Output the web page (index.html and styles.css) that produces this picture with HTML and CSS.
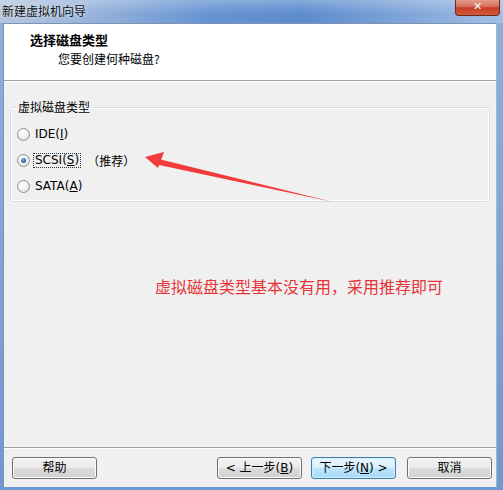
FILE: index.html
```html
<!DOCTYPE html>
<html>
<head>
<meta charset="utf-8">
<link rel="stylesheet" href="styles.css">
</head>
<body>
<div class="window">
  <div class="titlebar">
    <span class="title">新建虚拟机向导</span>
    <span class="close">✕</span>
  </div>
  <div class="client">
    <div class="header">
      <div class="heading">选择磁盘类型</div>
      <div class="subtitle">您要创建何种磁盘?</div>
    </div>
    <fieldset class="group">
      <legend>虚拟磁盘类型</legend>
      <div class="row"><span class="radio"></span><span class="label">IDE(<u>I</u>)</span></div>
      <div class="row"><span class="radio checked"></span><span class="label focus">SCSI(<u>S</u>)</span><span class="rec">（推荐）</span></div>
      <div class="row"><span class="radio"></span><span class="label">SATA(<u>A</u>)</span></div>
    </fieldset>
    <div class="note">虚拟磁盘类型基本没有用，采用推荐即可</div>
    <div class="spacer"></div>
    <div class="separator"></div>
    <div class="buttons">
      <span class="btn">帮助</span>
      <span class="grow"></span>
      <span class="btn">&lt; 上一步(<u>B</u>)</span>
      <span class="btn default">下一步(<u>N</u>) &gt;</span>
      <span class="btn cancel">取消</span>
    </div>
  </div>
</div>
<svg class="arrow" width="503" height="490" viewBox="0 0 503 490">
  <polygon points="155.7,158.2 333,202 154.3,164" fill="#f23b3b"/>
  <polygon points="145,157 164,152 158,168" fill="#f23b3b"/>
</svg>
</body>
</html>
```
FILE: styles.css
```css
html, body {
  margin: 0;
  padding: 0;
}
body {
  width: 503px;
  height: 490px;
  overflow: hidden;
  position: relative;
  font-family: "DejaVu Sans", "Noto Sans CJK SC", sans-serif;
  font-size: 12px;
  color: #000;
  background: linear-gradient(to bottom, #8fb0dc, #6f98d0);
}
.window {
  width: 503px;
  height: 490px;
  display: flex;
  flex-direction: column;
}
.titlebar {
  height: 23px;
  flex: none;
  position: relative;
  background:
    linear-gradient(to bottom, rgba(255,255,255,0.25), rgba(255,255,255,0) 60%),
    linear-gradient(to right, #b4c6df 0%, #97b3db 18%, #6593d2 42%, #5d8ccd 60%, #7ea4d8 80%, #a3bfe4 100%);
}
.title {
  position: absolute;
  left: 2px;
  top: 3px;
  font-family: "Noto Sans CJK SC", sans-serif;
  font-size: 12px;
  line-height: 16px;
  color: #111;
  text-shadow: 0 0 4px rgba(255,255,255,0.9);
}
.close {
  position: absolute;
  left: 455px;
  top: -1px;
  width: 43px;
  height: 16px;
  border: 1px solid #6a2a22;
  border-top: none;
  border-radius: 0 0 4px 4px;
  background: linear-gradient(to bottom, #e9a190 0%, #d6735f 45%, #c63e25 55%, #d45a3a 100%);
  color: #fff;
  font-size: 11px;
  font-weight: bold;
  line-height: 16px;
  text-align: center;
}
.client {
  flex: 1;
  margin: 0 6px 3px 3px;
  border-left: 1px solid #7d93b1;
  border-top: 1px solid #7d93b1;
  border-right: 1px solid #a6b6cb;
  background: #f0f0f0;
  display: flex;
  flex-direction: column;
}
.header {
  height: 57px;
  background: #fff;
  border-bottom: 1px solid #a0a0a0;
  box-shadow: 0 1px 0 #fff;
  padding-left: 26px;
  box-sizing: border-box;
  padding-top: 8px;
}
.heading {
  font-family: "Noto Sans CJK SC", sans-serif;
  font-size: 13px;
  font-weight: bold;
  line-height: 16px;
}
.subtitle {
  font-family: "Noto Sans CJK SC", sans-serif;
  font-size: 12px;
  line-height: 16px;
  margin-top: 3px;
  padding-left: 28px;
}
.group {
  margin: 18px 6px 0 6px;
  padding: 0 0 2px 0;
  border: 1px solid #d5dfe5;
  border-radius: 3px;
  box-shadow: inset 0 0 0 1px #fff;
  min-width: 0;
}
.group legend {
  margin-left: 5px;
  padding: 0 2px;
  font-family: "Noto Sans CJK SC", sans-serif;
  font-size: 12px;
  line-height: 16px;
}
.row {
  height: 26px;
  display: flex;
  align-items: center;
  padding-left: 6px;
}
.row:first-of-type {
  margin-top: 6px;
}
.radio {
  width: 11px;
  height: 11px;
  border: 1px solid #8e8f8f;
  border-radius: 50%;
  background: radial-gradient(circle at 40% 35%, #ffffff 0%, #f4f4f4 40%, #d3d3d3 100%);
  display: flex;
  align-items: center;
  justify-content: center;
  flex: none;
}
.radio.checked::after {
  content: "";
  width: 5px;
  height: 5px;
  border-radius: 50%;
  background: radial-gradient(circle at 40% 35%, #8ab4e4 0%, #3a6db0 50%, #1c3e74 100%);
}
.label {
  margin-left: 3px;
  line-height: 13px;
  padding: 0 1px;
  border: 1px dotted transparent;
}
.label.focus {
  border-color: #333;
}
.rec {
  margin-left: 6px;
  font-family: "Noto Sans CJK SC", sans-serif;
}
.note {
  margin-top: 74px;
  padding-left: 151px;
  font-family: "Noto Sans CJK SC", sans-serif;
  font-size: 16px;
  line-height: 20px;
  color: #e63436;
}
.spacer {
  flex: 1;
}
.separator {
  height: 1px;
  background: #a0a0a0;
  border-bottom: 1px solid #fff;
}
.buttons {
  display: flex;
  padding: 8px 4px 8px 8px;
}
.grow {
  flex: 1;
}
.btn {
  width: 83px;
  height: 20px;
  border: 1px solid #707070;
  border-radius: 3px;
  box-shadow: inset 0 0 0 1px #fbfbfb;
  background: linear-gradient(to bottom, #f2f2f2 0%, #ebebeb 50%, #dddddd 50%, #cfcfcf 100%);
  font-family: "DejaVu Sans", "Noto Sans CJK SC", sans-serif;
  font-size: 12px;
  line-height: 20px;
  text-align: center;
  margin-left: 9px;
}
.btn:first-child {
  margin-left: 0;
}
.btn.default {
  border-color: #3c7fb1;
  box-shadow: inset 0 0 0 1px #d2eefc;
  background: linear-gradient(to bottom, #eaf6fd 0%, #d9f0fc 50%, #bee6fd 50%, #a7d9f5 100%);
}
.btn.cancel {
  margin-left: 11px;
}
.arrow {
  position: absolute;
  left: 0;
  top: 0;
  pointer-events: none;
}
```
